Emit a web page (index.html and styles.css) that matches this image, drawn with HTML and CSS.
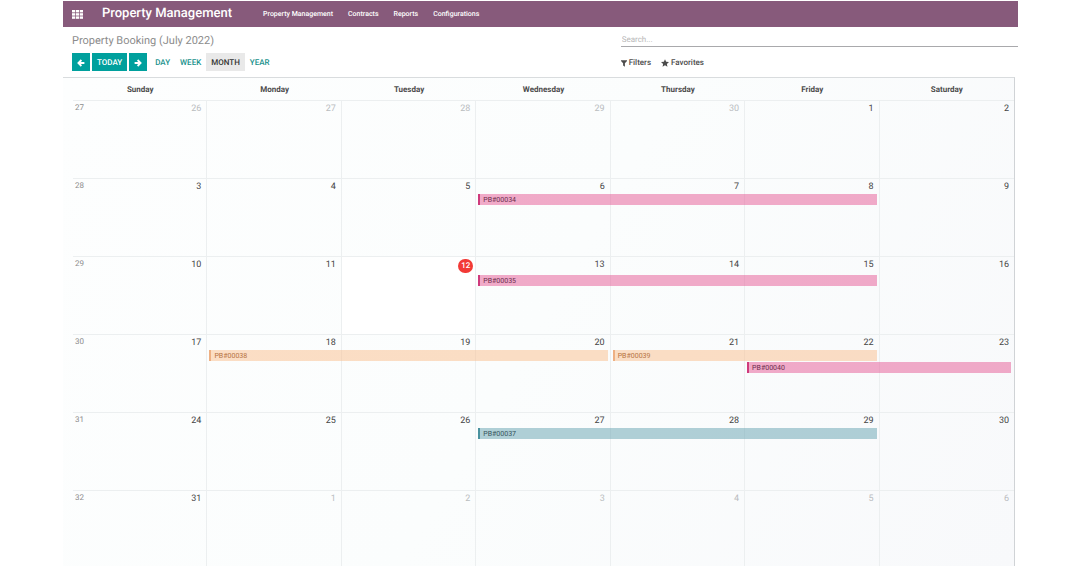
FILE: index.html
```html
<!DOCTYPE html>
<html lang="en">
<head>
  <meta charset="UTF-8">
  <meta name="viewport" content="width=device-width, initial-scale=1.0">
  <title>Property Management</title>
  <link rel="stylesheet" href="styles.css">
</head>
<body>

  <div class="app">

    <nav class="navbar">
      <button class="apps-button" type="button" aria-label="Applications">
        <svg width="11" height="9" viewBox="0 0 11 9" fill="currentColor">
          <rect x="0" y="0" width="3.2" height="2.4"/><rect x="3.9" y="0" width="3.2" height="2.4"/><rect x="7.8" y="0" width="3.2" height="2.4"/>
          <rect x="0" y="3.2" width="3.2" height="2.4"/><rect x="3.9" y="3.2" width="3.2" height="2.4"/><rect x="7.8" y="3.2" width="3.2" height="2.4"/>
          <rect x="0" y="6.4" width="3.2" height="2.4"/><rect x="3.9" y="6.4" width="3.2" height="2.4"/><rect x="7.8" y="6.4" width="3.2" height="2.4"/>
        </svg>
      </button>
      <a class="brand" href="#">Property Management</a>
      <div class="nav-links">
        <a href="#">Property Management</a>
        <a href="#">Contracts</a>
        <a href="#">Reports</a>
        <a href="#">Configurations</a>
      </div>
    </nav>

    <div class="control-panel">
      <div>
        <h1 class="page-title">Property Booking (July 2022)</h1>
        <div class="calendar-buttons">
          <div class="date-buttons">
            <button class="btn btn-primary" type="button" aria-label="Previous">
              <svg width="8" height="8" viewBox="0 0 8 8" fill="none" stroke="currentColor" stroke-width="1.8"><path d="M4.4 1 L1.4 4 L4.4 7 M1.6 4 H7.4"/></svg>
            </button>
            <button class="btn btn-primary" type="button">TODAY</button>
            <button class="btn btn-primary" type="button" aria-label="Next">
              <svg width="8" height="8" viewBox="0 0 8 8" fill="none" stroke="currentColor" stroke-width="1.8"><path d="M3.6 1 L6.6 4 L3.6 7 M6.4 4 H0.6"/></svg>
            </button>
          </div>
          <div class="scale-buttons">
            <button class="btn btn-link" type="button">DAY</button>
            <button class="btn btn-link" type="button">WEEK</button>
            <button class="btn btn-link active" type="button">MONTH</button>
            <button class="btn btn-link" type="button">YEAR</button>
          </div>
        </div>
      </div>
      <div>
        <input class="search" type="text" placeholder="Search..." aria-label="Search">
        <div class="search-options">
          <button class="option" type="button">
            <svg width="6" height="7" viewBox="0 0 6 7" fill="currentColor"><path d="M0 0.3 H6 V1 L3.9 3.3 V6.8 L2.1 5.4 V3.3 L0 1 Z"/></svg>
            Filters
          </button>
          <button class="option" type="button">
            <svg width="8" height="8" viewBox="0 0 14 14" fill="currentColor"><path d="M7 0.3 L9 4.8 L14 5.3 L10.3 8.6 L11.3 13.5 L7 11 L2.7 13.5 L3.7 8.6 L0 5.3 L5 4.8 Z"/></svg>
            Favorites
          </button>
        </div>
      </div>
    </div>

    <div class="calendar">
      <table class="month">
        <thead>
          <tr>
            <th>Sunday</th><th>Monday</th><th>Tuesday</th><th>Wednesday</th><th>Thursday</th><th>Friday</th><th>Saturday</th>
          </tr>
        </thead>
        <tbody>
          <tr>
            <td class="other"><span class="week">27</span><span class="day">26</span></td>
            <td class="other"><span class="day">27</span></td>
            <td class="other"><span class="day">28</span></td>
            <td class="other"><span class="day">29</span></td>
            <td class="other"><span class="day">30</span></td>
            <td><span class="day">1</span></td>
            <td><span class="day">2</span></td>
          </tr>
          <tr>
            <td><span class="week">28</span><span class="day">3</span></td>
            <td><span class="day">4</span></td>
            <td><span class="day">5</span></td>
            <td><span class="day">6</span><a class="event pink span-3" href="#">PB#00034</a></td>
            <td><span class="day">7</span></td>
            <td><span class="day">8</span></td>
            <td><span class="day">9</span></td>
          </tr>
          <tr class="current-week">
            <td><span class="week">29</span><span class="day">10</span></td>
            <td><span class="day">11</span></td>
            <td class="today"><span class="day">12</span></td>
            <td><span class="day">13</span><a class="event pink span-3" href="#">PB#00035</a></td>
            <td><span class="day">14</span></td>
            <td><span class="day">15</span></td>
            <td><span class="day">16</span></td>
          </tr>
          <tr>
            <td><span class="week">30</span><span class="day">17</span></td>
            <td><span class="day">18</span><a class="event orange span-3" href="#">PB#00038</a></td>
            <td><span class="day">19</span></td>
            <td><span class="day">20</span></td>
            <td><span class="day">21</span><a class="event orange span-2" href="#">PB#00039</a></td>
            <td><span class="day">22</span><a class="event pink span-2 second" href="#">PB#00040</a></td>
            <td><span class="day">23</span></td>
          </tr>
          <tr>
            <td><span class="week">31</span><span class="day">24</span></td>
            <td><span class="day">25</span></td>
            <td><span class="day">26</span></td>
            <td><span class="day">27</span><a class="event blue span-3" href="#">PB#00037</a></td>
            <td><span class="day">28</span></td>
            <td><span class="day">29</span></td>
            <td><span class="day">30</span></td>
          </tr>
          <tr>
            <td><span class="week">32</span><span class="day">31</span></td>
            <td class="other"><span class="day">1</span></td>
            <td class="other"><span class="day">2</span></td>
            <td class="other"><span class="day">3</span></td>
            <td class="other"><span class="day">4</span></td>
            <td class="other"><span class="day">5</span></td>
            <td class="other"><span class="day">6</span></td>
          </tr>
        </tbody>
      </table>
    </div>

  </div>

</body>
</html>
```
FILE: styles.css
```css
* {
  box-sizing: border-box;
}

body {
  margin: 0;
  padding: 1px 62px 0 63px;
  font-family: Roboto, "Liberation Sans", sans-serif;
  font-size: 8px;
  line-height: 10px;
  text-rendering: geometricPrecision;
  color: #4c4c4c;
  background-color: #fff;
}

a {
  color: inherit;
  text-decoration: none;
}

button {
  font: inherit;
  text-rendering: inherit;
  border: none;
  background: none;
  cursor: pointer;
}

svg {
  display: block;
}

/* top bar */
.navbar {
  display: flex;
  align-items: center;
  height: 26px;
  padding-left: 9px;
  background-color: #875a7b;
  color: #fff;
}

.apps-button {
  padding: 0;
  color: #fff;
}

.brand {
  margin-left: 19px;
  font-size: 13px;
  font-weight: 500;
  line-height: 16px;
}

.nav-links {
  display: flex;
  gap: 15px;
  margin-left: 31px;
  font-size: 7px;
  font-weight: 500;
}

/* control panel */
.control-panel {
  display: grid;
  grid-template-columns: 58fr 42fr;
  height: 50px;
  padding: 6px 0 0 9px;
}

.page-title {
  margin: 0 0 4px;
  font-size: 11px;
  font-weight: 400;
  line-height: 16px;
  color: #8c8c8c;
}

.calendar-buttons {
  display: flex;
  gap: 3px;
}

.date-buttons {
  display: flex;
  gap: 2px;
}

.scale-buttons {
  display: flex;
}

.btn {
  height: 18px;
  padding: 1px 5px 0;
  font-weight: 500;
}

.btn-primary {
  background-color: #00a09d;
  color: #fff;
}

.btn-link {
  color: #17918c;
}

.btn-link.active {
  background-color: #e9e9e9;
  color: #333;
}

.search {
  display: block;
  width: 100%;
  height: 14px;
  padding: 0 1px;
  border: none;
  border-bottom: 1px solid #a9a9ac;
  outline: none;
  background: none;
  font: inherit;
  text-rendering: inherit;
  color: #4c4c4c;
}

.search::placeholder {
  color: #b9b9b9;
}

.search-options {
  display: flex;
  gap: 10px;
  padding: 11px 0;
}

.option {
  display: flex;
  align-items: center;
  gap: 2px;
  padding: 0;
  font-weight: 500;
  color: #4c4c4c;
}

/* month view */
.calendar {
  margin-right: 3px;
  padding-left: 10px;
  border-top: 1px solid #d9dcde;
  border-right: 1px solid #d0d3d6;
  background: linear-gradient(120deg, #fdfefe, #fbfdfd 50%, #f8f9fb);
}

.month {
  width: 100%;
  table-layout: fixed;
  border-spacing: 0;
}

.month th {
  height: 22px;
  padding: 1px 0 0;
  font-weight: 700;
}

.month td {
  position: relative;
  height: 78px;
  padding: 2px 5px;
  border-top: 1px solid #eceff0;
  border-right: 1px solid #eceff0;
  vertical-align: top;
}

.month tr:last-child td {
  height: 76px;
}

.month td:last-child {
  border-right: none;
}

.week {
  float: left;
  margin-left: -3px;
  color: #8c8c8c;
}

.day {
  float: right;
  font-size: 9px;
  line-height: 12px;
  color: #444;
}

.other .day {
  color: #b9bcbf;
}

.month .today {
  background-color: #fff;
}

.today .day {
  width: 15px;
  margin-right: -3px;
  border-radius: 8px;
  background-color: #f23a36;
  color: #fff;
  font-size: 8px;
  font-weight: 500;
  line-height: 14px;
  text-align: center;
}

/* bookings run over the cells to the right of the one they start in */
.event {
  position: absolute;
  top: 15px;
  left: 2px;
  z-index: 1;
  height: 11px;
  padding-left: 3px;
  border-left: 2px solid;
  font-size: 7px;
  line-height: 12px;
}

.current-week .event {
  top: 18px;
}

.event.second {
  top: 27px;
}

.span-2 {
  width: calc(200% - 3px);
}

.span-3 {
  width: calc(300% - 2px);
}

.pink {
  border-color: #cf3a7c;
  background-color: rgba(230, 88, 148, 0.5);
  color: #6b2b4b;
}

.orange {
  border-color: #eeb083;
  background-color: rgba(250, 190, 140, 0.5);
  color: #b5713d;
}

.blue {
  border-color: #4a929f;
  background-color: rgba(100, 162, 175, 0.5);
  color: #34525a;
}
```
